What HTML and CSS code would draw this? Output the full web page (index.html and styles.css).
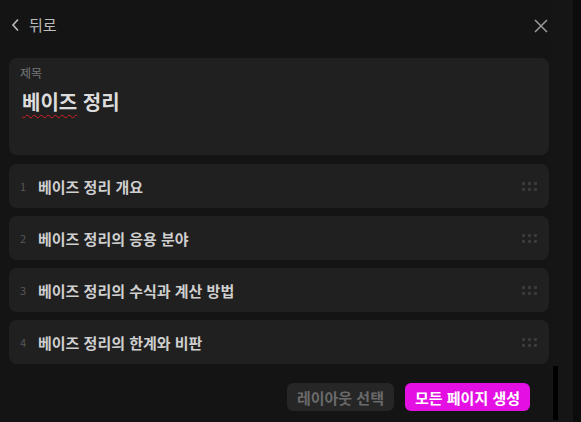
FILE: index.html
```html
<!DOCTYPE html>
<html lang="ko">
<head>
<meta charset="utf-8">
<link rel="stylesheet" href="styles.css">
</head>
<body>
<div class="screen">
  <div class="panel">
    <header class="header">
      <button class="back">
        <svg width="9" height="14" viewBox="0 0 9 14"><path d="M7 1.5 L2 7 L7 12.5" fill="none" stroke="#bdbdbd" stroke-width="1.6"/></svg>
        <span>뒤로</span>
      </button>
      <button class="close">
        <svg width="14" height="14" viewBox="0 0 14 14"><path d="M1 1 L13 13 M13 1 L1 13" fill="none" stroke="#9a9a9a" stroke-width="1.5"/></svg>
      </button>
    </header>
    <section class="title-card">
      <div class="label">제목</div>
      <div class="title"><span class="spell">베이즈</span> 정리</div>
    </section>
    <ul class="list">
      <li class="item"><span class="num">1</span><span class="text">베이즈 정리 개요</span><span class="grip"><i></i><i></i><i></i><i></i><i></i><i></i></span></li>
      <li class="item"><span class="num">2</span><span class="text">베이즈 정리의 응용 분야</span><span class="grip"><i></i><i></i><i></i><i></i><i></i><i></i></span></li>
      <li class="item"><span class="num">3</span><span class="text">베이즈 정리의 수식과 계산 방법</span><span class="grip"><i></i><i></i><i></i><i></i><i></i><i></i></span></li>
      <li class="item"><span class="num">4</span><span class="text">베이즈 정리의 한계와 비판</span><span class="grip"><i></i><i></i><i></i><i></i><i></i><i></i></span></li>
    </ul>
    <footer class="footer">
      <button class="btn btn-secondary">레이아웃 선택</button>
      <button class="btn btn-primary">모든 페이지 생성</button>
    </footer>
    <div class="scroll-track"><div class="scroll-thumb"></div></div>
  </div>
  <div class="edge"></div>
</div>
</body>
</html>
```
FILE: styles.css
```css
* { box-sizing: border-box; }
html, body { margin: 0; padding: 0; }
body {
  width: 581px;
  height: 422px;
  overflow: hidden;
  background: #0c0c0c;
  font-family: "Noto Sans CJK KR", "Noto Sans", sans-serif;
}
.screen { display: flex; height: 422px; }
.panel {
  position: relative;
  width: 573px;
  height: 422px;
  background: #141414;
  padding: 0 24px 0 9px;
  display: flex;
  flex-direction: column;
}
.edge { flex: 1; background: #0c0c0c; }
.header {
  height: 58px;
  display: flex;
  justify-content: space-between;
  align-items: flex-start;
  padding-top: 15px;
}
button { font-family: inherit; border: none; background: none; padding: 0; cursor: pointer; }
.back {
  display: flex;
  align-items: center;
  gap: 9px;
  color: #bdbdbd;
  font-size: 15px;
  line-height: 20px;
  padding-left: 2px;
}
.back svg { display: block; }
.close { padding: 4px 1px 0 0; }
.close svg { display: block; }
.title-card {
  height: 97px;
  background: #202020;
  border-radius: 8px;
  padding: 7px 11px;
}
.label { font-size: 12px; line-height: 16px; color: #777; }
.title {
  margin-top: 7px;
  font-size: 20px;
  line-height: 28px;
  font-weight: 700;
  color: #dcdcdc;
  padding-left: 2px;
}
.spell {
  text-decoration: underline wavy #d42020;
  text-decoration-thickness: 1px;
  text-underline-offset: 4px;
}
.list {
  list-style: none;
  margin: 9px 0 0;
  padding: 0;
  display: flex;
  flex-direction: column;
  gap: 8px;
}
.item {
  height: 44px;
  background: #202020;
  border-radius: 8px;
  display: flex;
  align-items: center;
  padding: 0 12px 0 11px;
}
.num {
  width: 18px;
  font-size: 11px;
  color: #575757;
}
.text {
  flex: 1;
  font-size: 15px;
  font-weight: 700;
  color: #cfcfcf;
}
.grip {
  display: grid;
  grid-template-columns: repeat(3, 3px);
  grid-auto-rows: 3px;
  gap: 3px 3px;
}
.grip i { display: block; width: 3px; height: 3px; background: #3c3c3c; border-radius: 1px; }
.footer {
  margin-top: 19px;
  display: flex;
  justify-content: flex-end;
  gap: 11px;
  padding-right: 19px;
}
.btn {
  height: 28px;
  border-radius: 6px;
  font-size: 15px;
  font-weight: 700;
  padding: 0 10px;
}
.btn-secondary { background: #262626; color: #6a6a6a; }
.btn-primary { background: #e30fe3; color: #ffffff; }
.scroll-track {
  position: absolute;
  top: 0;
  right: 0;
  width: 22px;
  height: 422px;
  background: #151515;
}
.scroll-thumb {
  position: absolute;
  left: 2px;
  top: 366px;
  width: 5px;
  height: 54px;
  background: #000;
}
```
